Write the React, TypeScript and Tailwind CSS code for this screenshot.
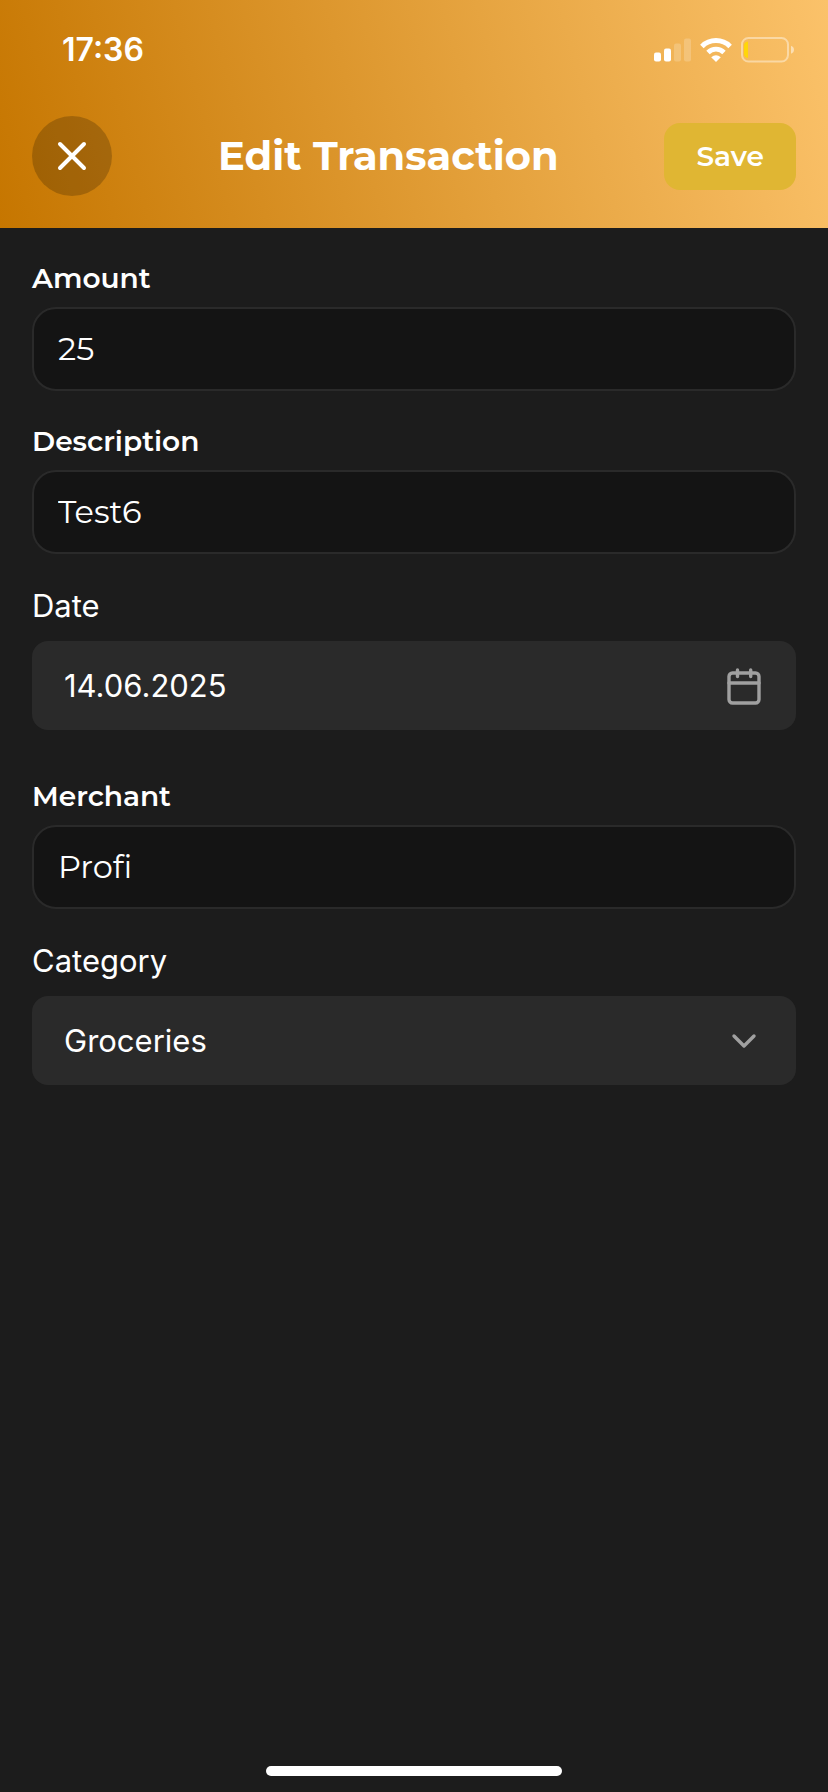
import { useState } from "react";
import type { InputHTMLAttributes } from "react";

function SignalIcon() {
  return (
    <svg width="37" height="24" viewBox="0 0 37 24" fill="white" aria-hidden="true">
      <rect x="0" y="14.5" width="7" height="9" rx="2" />
      <rect x="10" y="10.5" width="7" height="13" rx="2" />
      <rect x="20" y="5.5" width="7" height="18" rx="2" opacity="0.2" />
      <rect x="30" y="0.5" width="7" height="23" rx="2" opacity="0.2" />
    </svg>
  );
}

function WifiIcon() {
  return (
    <svg width="32" height="24" viewBox="0 0 32 24" fill="none" aria-hidden="true">
      <path d="M1.9 8.4A20 20 0 0 1 30.1 8.4" stroke="white" strokeWidth="5" />
      <path d="M8 14.5A11.3 11.3 0 0 1 24 14.5" stroke="white" strokeWidth="4.8" />
      <path d="M16 24L11.2 19.3Q16 15.3 20.8 19.3Z" fill="white" />
    </svg>
  );
}

function BatteryIcon() {
  return (
    <svg width="54" height="26" viewBox="0 0 54 26" fill="none" aria-hidden="true">
      <rect x="1" y="1" width="46" height="23.5" rx="6.5" stroke="white" strokeOpacity="0.42" strokeWidth="2" />
      <path d="M50 8.8Q53 10 53 12.8Q53 15.6 50 16.8Z" fill="white" fillOpacity="0.5" />
      <path d="M7 4.5V21Q3 20.5 3 17V8.5Q3 5 7 4.5Z" fill="#ffd60a" />
    </svg>
  );
}

function CloseIcon() {
  return (
    <svg width="40" height="40" viewBox="0 0 40 40" fill="none" stroke="white" strokeWidth="4" strokeLinecap="round" aria-hidden="true">
      <path d="M8 8L32 32M32 8L8 32" />
    </svg>
  );
}

function CalendarIcon() {
  return (
    <svg width="40" height="40" viewBox="0 0 40 40" fill="none" stroke="#a0a0a0" strokeWidth="3.4" strokeLinecap="round" aria-hidden="true">
      <rect x="5" y="7" width="30" height="30" rx="3.5" />
      <path d="M5 17H35M13.5 4V10.5M26.7 4V10.5" />
    </svg>
  );
}

function ChevronIcon() {
  return (
    <svg
      className="pointer-events-none col-start-1 row-start-1 mr-8 self-center justify-self-end"
      width="40"
      height="40"
      viewBox="0 0 40 40"
      fill="none"
      stroke="#a0a0a0"
      strokeWidth="3.4"
      strokeLinecap="round"
      strokeLinejoin="round"
      aria-hidden="true"
    >
      <path d="M10 15L20 25L30 15" />
    </svg>
  );
}

function TextField({ label, id, ...rest }: { label: string; id: string } & InputHTMLAttributes<HTMLInputElement>) {
  return (
    <div className="flex flex-col gap-[10px]">
      <label htmlFor={id} className="text-[28px] leading-[37px] font-semibold">
        {label}
      </label>
      <input
        id={id}
        type="text"
        className="h-[84px] w-full rounded-3xl border-2 border-[#2a2a2a] bg-[#141414] px-6 pb-[2px] text-[32px] font-normal outline-none"
        {...rest}
      />
    </div>
  );
}

export default function App() {
  const [date, setDate] = useState("14.06.2025");

  return (
    <div className="flex min-h-screen flex-col bg-[#1c1c1c] font-[Montserrat,Inter,sans-serif] text-white">
      <header className="bg-[linear-gradient(75deg,#c67600,#fbc26a)] pb-8">
        <div className="flex h-[100px] items-center justify-between pr-[33px] pl-[62px] font-[Inter,sans-serif]">
          <span className="text-[32px] leading-10 font-semibold">17:36</span>
          <div className="flex items-center gap-[9px]">
            <SignalIcon />
            <WifiIcon />
            <BatteryIcon />
          </div>
        </div>
        <div className="flex items-center justify-between px-8 pt-4">
          <button type="button" aria-label="Close" className="flex size-20 items-center justify-center rounded-full bg-black/20">
            <CloseIcon />
          </button>
          <h1 className="text-[40px] leading-[48px] font-bold">Edit Transaction</h1>
          <button type="submit" form="transaction" className="rounded-2xl bg-[#e0b633] px-8 py-4 text-[28px] leading-[35px] font-semibold">
            Save
          </button>
        </div>
      </header>

      <form id="transaction" className="flex flex-1 flex-col gap-8 px-8 pt-8" onSubmit={(e) => e.preventDefault()}>
        <TextField id="amount" label="Amount" defaultValue="25" inputMode="decimal" />
        <TextField id="description" label="Description" defaultValue="Test6" />

        <div className="mb-4 flex flex-col gap-4 font-[Inter,sans-serif]">
          <label htmlFor="date" className="text-[31px] leading-[39px]">
            Date
          </label>
          <div className="flex h-[89px] items-center rounded-2xl bg-[#2a2a2a] px-8">
            <input
              id="date"
              type="text"
              value={date}
              onChange={(e) => setDate(e.target.value)}
              className="min-w-0 flex-1 bg-transparent text-[31px] leading-[39px] outline-none"
            />
            <button type="button" aria-label="Open calendar">
              <CalendarIcon />
            </button>
          </div>
        </div>

        <TextField id="merchant" label="Merchant" defaultValue="Profi" />

        <div className="flex flex-col gap-4 font-[Inter,sans-serif]">
          <label htmlFor="category" className="text-[31px] leading-[39px]">
            Category
          </label>
          <div className="grid rounded-2xl bg-[#2a2a2a]">
            <select
              id="category"
              defaultValue="Groceries"
              className="col-start-1 row-start-1 h-[89px] w-full appearance-none rounded-2xl bg-transparent px-8 text-[31px] leading-[39px] outline-none"
            >
              <option>Groceries</option>
            </select>
            <ChevronIcon />
          </div>
        </div>
      </form>

      <div className="mx-auto mb-4 h-[10px] w-[296px] rounded-full bg-white" />
    </div>
  );
}
